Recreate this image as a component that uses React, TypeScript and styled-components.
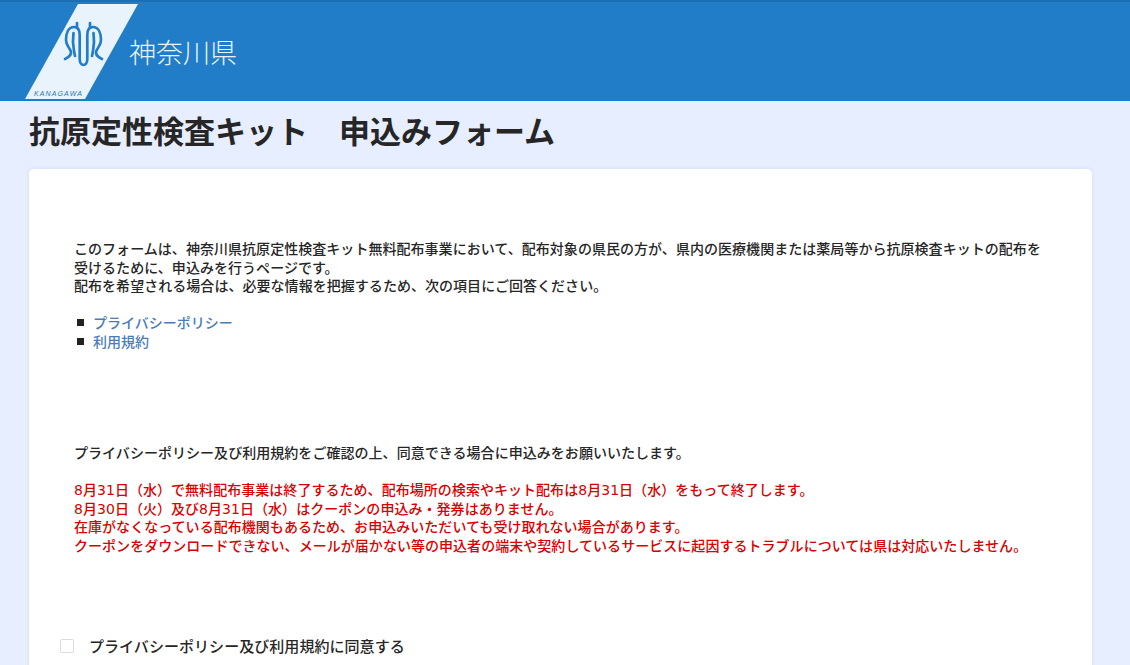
import React from "react";
import styled, { createGlobalStyle } from "styled-components";

const GlobalStyle = createGlobalStyle`
  html, body {
    margin: 0;
    padding: 0;
    background: #e7eeff;
    overflow: hidden;
  }
  body {
    font-family: "Noto Sans CJK JP", "Noto Sans", sans-serif;
    color: #222;
  }
`;

const Page = styled.div`
  height: 665px;
  overflow: hidden;
`;

const Header = styled.header`
  height: 98px;
  background: #217dc8;
  border-top: 2px solid #1a6fb5;
  border-bottom: 1px solid #0f7fd0;
  display: flex;
  align-items: flex-start;
  padding-left: 24px;
  box-sizing: content-box;
`;

const LogoMark = styled.svg`
  width: 115px;
  height: 98px;
  flex: none;
`;

const PrefName = styled.span`
  margin: 32px 0 0 -10px;
  font-size: 27px;
  line-height: 36px;
  font-weight: 300;
  color: #eaf3fb;
`;

const Title = styled.h1`
  margin: 0;
  padding: 8px 0 0 29px;
  height: 57px;
  box-sizing: border-box;
  font-size: 31px;
  line-height: 42px;
  font-weight: 700;
  color: #262626;
  white-space: pre;
`;

const Card = styled.main`
  margin: 11px 38px 0 29px;
  padding: 71px 45px 0 45px;
  height: 560px;
  background: #fff;
  border-radius: 5px;
  box-shadow: 0 0 4px rgba(120, 140, 190, 0.18);
`;

const Paragraph = styled.p<{ $danger?: boolean; $gap?: number }>`
  margin: 0 0 ${(p) => p.$gap ?? 0}px;
  font-family: "DejaVu Sans", "Noto Sans CJK JP", sans-serif;
  font-size: 14px;
  line-height: 18.5px;
  font-weight: 500;
  letter-spacing: 0.04px;
  color: ${(p) => (p.$danger ? "#d90000" : "#262626")};
`;

const LinkList = styled.ul`
  list-style: none;
  margin: 0 0 93px;
  padding: 0 0 0 3px;
`;

const LinkItem = styled.li`
  display: flex;
  align-items: center;
  height: 19px;
  font-size: 14px;
  font-weight: 500;

  &::before {
    content: "";
    width: 7px;
    height: 7px;
    margin-right: 9px;
    background: #222;
  }
`;

const DocLink = styled.a`
  color: #4a7db8;
  text-decoration: none;
`;

const AgreeRow = styled.label`
  display: flex;
  align-items: center;
  margin: 80px 0 0 -14px;
  font-size: 15px;
  font-weight: 500;
  letter-spacing: 0.05px;
  color: #262626;
`;

const AgreeBox = styled.span`
  width: 12px;
  height: 12px;
  margin-right: 15px;
  border: 1px solid #dcdcdc;
  border-radius: 2px;
  background: #fff;
`;

const App: React.FC = () => {
  return (
    <Page>
      <GlobalStyle />
      <Header>
        <LogoMark viewBox="0 0 115 98">
          <polygon points="54,2 114,2 61,97 1,97" fill="#e8f3fc" />
          <g fill="none" stroke="#217dc8" strokeWidth="2.7" strokeLinecap="round">
            <path d="M41 57 C45 55 48 52 46.7 49 C45 45 42 43 42 38 C42 32 44 25 50 25 C54 25 55.7 28 55.7 33 L55.7 57 C55.7 65 63.3 65 63.3 57 L63.3 33 C63.3 28 65 25 69 25 C75 25 77 32 77 38 C77 43 74 45 72.3 49 C71 52 74 55 78 57" />
            <path d="M49.5 31 C48.5 38 49 44 50 49 L51 54" />
            <path d="M69.5 31 C70.5 38 70 44 69 49 L68 54" />
            <path d="M53 21 L53 26 M66 21 L66 26" />
          </g>
          <text x="10" y="93.5" fontSize="7" fontStyle="italic" fontFamily="Liberation Sans, sans-serif" letterSpacing="1.1" fill="#2a77b8">KANAGAWA</text>
        </LogoMark>
        <PrefName>神奈川県</PrefName>
      </Header>
      <Title>抗原定性検査キット　申込みフォーム</Title>
      <Card>
        <Paragraph $gap={17}>
          このフォームは、神奈川県抗原定性検査キット無料配布事業において、配布対象の県民の方が、県内の医療機関または薬局等から抗原検査キットの配布を受けるために、申込みを行うページです。
          <br />
          配布を希望される場合は、必要な情報を把握するため、次の項目にご回答ください。
        </Paragraph>
        <LinkList>
          <LinkItem><DocLink href="#">プライバシーポリシー</DocLink></LinkItem>
          <LinkItem><DocLink href="#">利用規約</DocLink></LinkItem>
        </LinkList>
        <Paragraph $gap={19}>プライバシーポリシー及び利用規約をご確認の上、同意できる場合に申込みをお願いいたします。</Paragraph>
        <Paragraph $danger>
          8月31日（水）で無料配布事業は終了するため、配布場所の検索やキット配布は8月31日（水）をもって終了します。
          <br />
          8月30日（火）及び8月31日（水）はクーポンの申込み・発券はありません。
          <br />
          在庫がなくなっている配布機関もあるため、お申込みいただいても受け取れない場合があります。
          <br />
          クーポンをダウンロードできない、メールが届かない等の申込者の端末や契約しているサービスに起因するトラブルについては県は対応いたしません。
        </Paragraph>
        <AgreeRow>
          <AgreeBox />
          プライバシーポリシー及び利用規約に同意する
        </AgreeRow>
      </Card>
    </Page>
  );
};

export default App;
